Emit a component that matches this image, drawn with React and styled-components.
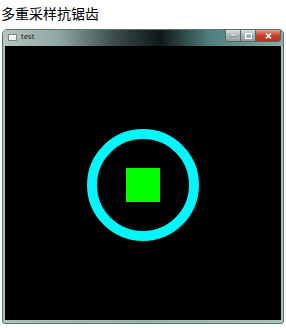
import React from "react";
import styled, { createGlobalStyle } from "styled-components";

const GlobalStyle = createGlobalStyle`
  html, body {
    margin: 0;
    padding: 0;
    background: #ffffff;
  }
`;

const Page = styled.div`
  width: 286px;
  height: 328px;
  display: flex;
  flex-direction: column;
  background: #ffffff;
  overflow: hidden;
`;

const Caption = styled.div`
  height: 29px;
  padding-left: 1px;
  font-family: "Noto Sans CJK SC", sans-serif;
  font-size: 14px;
  line-height: 26px;
  color: #000000;
`;

const Window = styled.div`
  margin: 0 2px;
  height: 295px;
  display: flex;
  flex-direction: column;
  border: 1px solid #5c7470;
  border-radius: 5px 5px 3px 3px;
  background: linear-gradient(90deg, #a9c0bb 0%, #98b2ac 50%, #a9c2bc 100%);
  box-sizing: border-box;
  overflow: hidden;
`;

const TitleBar = styled.div`
  height: 16px;
  display: flex;
  align-items: flex-start;
  justify-content: space-between;
  background: linear-gradient(
    90deg,
    #b4c6c2 0%,
    #8ea7a2 20%,
    #3a4c4a 40%,
    #0e1817 56%,
    #4f807d 74%,
    #86aeaa 100%
  );
`;

const TitleLeft = styled.div`
  display: flex;
  align-items: center;
  gap: 4px;
  padding: 4px 0 0 5px;
`;

const AppIcon = styled.div`
  width: 9px;
  height: 7px;
  background: #f2f4f4;
  border: 1px solid #7b8886;
  box-sizing: border-box;
`;

const TitleText = styled.span`
  font-family: "DejaVu Sans", sans-serif;
  font-size: 7px;
  line-height: 7px;
  color: #1a2220;
`;

const Buttons = styled.div`
  display: flex;
  margin-right: 2px;
  border: 1px solid #5a6664;
  border-top: none;
  border-radius: 0 0 3px 3px;
  overflow: hidden;
`;

const CapButton = styled.div`
  width: ${(p) => (p.$wide ? "24px" : "14px")};
  height: 11px;
  display: flex;
  align-items: center;
  justify-content: center;
  background: ${(p) =>
    p.$close
      ? "linear-gradient(180deg, #e89a88 0%, #c9442c 50%, #b3301c 100%)"
      : "linear-gradient(180deg, #d7e0df 0%, #a7b6b4 50%, #8ea19e 100%)"};
  border-left: ${(p) => (p.$first ? "none" : "1px solid #5a6664")};
`;

const Client = styled.div`
  flex: 1;
  margin: 0 2px 3px 2px;
  background: #000000;
  display: flex;
  align-items: center;
  justify-content: center;
`;

const Ring = styled.div`
  width: 112px;
  height: 112px;
  margin-top: 3px;
  border-radius: 50%;
  border: 10px solid #00f8fc;
  box-sizing: border-box;
  display: flex;
  align-items: center;
  justify-content: center;
`;

const Square = styled.div`
  width: 34px;
  height: 34px;
  background: #00ff00;
`;

export default function App() {
  return (
    <>
      <GlobalStyle />
      <Page>
        <Caption>多重采样抗锯齿</Caption>
        <Window>
          <TitleBar>
            <TitleLeft>
              <AppIcon />
              <TitleText>test</TitleText>
            </TitleLeft>
            <Buttons>
              <CapButton $first>
                <svg width="7" height="3" viewBox="0 0 7 3">
                  <rect x="0" y="0" width="7" height="2" fill="#ffffff" stroke="#3a4442" strokeWidth="0.5" />
                </svg>
              </CapButton>
              <CapButton>
                <svg width="7" height="6" viewBox="0 0 7 6">
                  <rect x="0.5" y="0.5" width="6" height="5" fill="none" stroke="#ffffff" strokeWidth="1.2" />
                </svg>
              </CapButton>
              <CapButton $close $wide>
                <svg width="7" height="6" viewBox="0 0 7 6">
                  <path d="M1 0.5 L6 5.5 M6 0.5 L1 5.5" stroke="#ffffff" strokeWidth="1.6" />
                </svg>
              </CapButton>
            </Buttons>
          </TitleBar>
          <Client>
            <Ring>
              <Square />
            </Ring>
          </Client>
        </Window>
      </Page>
    </>
  );
}
